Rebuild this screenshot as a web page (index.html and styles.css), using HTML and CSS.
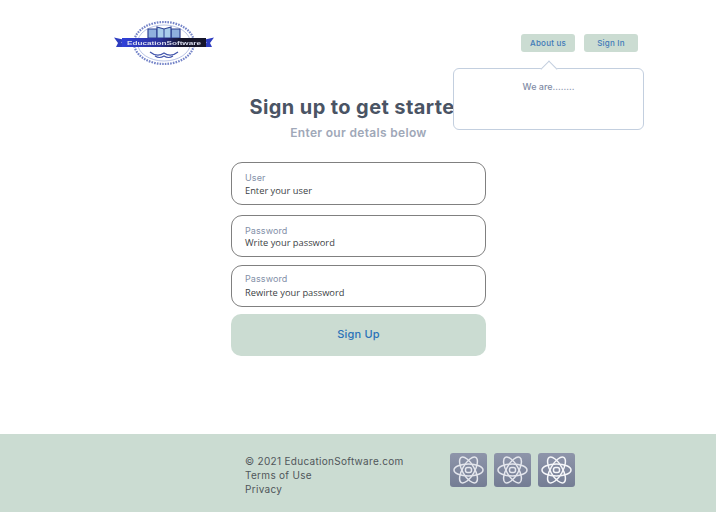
FILE: index.html
```html
<!DOCTYPE html>
<html lang="en">
<head>
<meta charset="utf-8">
<title>Sign up</title>
<link rel="stylesheet" href="styles.css">
</head>
<body>
<div class="page">
  <header class="header">
    <svg class="logo" width="100" height="46" viewBox="0 0 100 46" aria-label="EducationSoftware logo">
      <defs>
        <filter id="soft"><feGaussianBlur stdDeviation="0.55"/></filter>
        <linearGradient id="band" x1="0" x2="1" y1="0" y2="0"><stop offset="0" stop-color="#3040d8"/><stop offset="0.45" stop-color="#2b3098"/><stop offset="0.7" stop-color="#16162c"/><stop offset="1" stop-color="#15152a"/></linearGradient>
      </defs>
      <g filter="url(#soft)">
        <ellipse cx="50" cy="23" rx="30" ry="21" fill="#fff" stroke="#7484c8" stroke-width="2.2" stroke-dasharray="1.6 1.1"/>
        <ellipse cx="50" cy="23" rx="26.5" ry="18" fill="none" stroke="#aab6e0" stroke-width="0.8"/>
        <path d="M34 18V9h9v9zM57 18V9h9v9z" fill="#8fb0de" stroke="#2f4292" stroke-width="1.2"/>
        <path d="M43 18V7l7 2 7-2v11z" fill="#a9cdea" stroke="#2f4292" stroke-width="1.2"/>
        <path d="M50 9v9" stroke="#2f4292" stroke-width="1"/>
        <path d="M0 17.500l9 2-1.500 3 2.500 4.500H2l2-4z" fill="#2d3cc0"/>
        <path d="M100 17.500l-9 2 1.500 3-2.500 4.500h8l-2-4z" fill="#2d3cc0"/>
        <rect x="8" y="18" width="84" height="9" fill="url(#band)"/>
        <text x="50" y="24.800" class="logo-text" text-anchor="middle" textLength="74" lengthAdjust="spacingAndGlyphs">EducationSoftware</text>
        <path d="M36 32c5 4 10 4 14 1 4 3 9 3 14-1M41 36c3 2 6 2 9 0 3 2 6 2 9 0" fill="none" stroke="#4356ac" stroke-width="1.2"/>
      </g>
    </svg>
    <nav class="nav">
      <a class="nav-btn">About us</a>
      <a class="nav-btn">Sign In</a>
      <div class="popover"><span class="popover-text">We are........</span></div>
    </nav>
  </header>

  <main class="main">
    <h1 class="title">Sign up to get started</h1>
    <p class="subtitle">Enter our detals below</p>
    <form class="form">
      <div class="field field-user"><span class="label">User</span><span class="value">Enter your user</span></div>
      <div class="field field-pass"><span class="label">Password</span><span class="value">Write your password</span></div>
      <div class="field field-repeat"><span class="label">Password</span><span class="value">Rewirte your password</span></div>
      <button class="submit" type="button">Sign Up</button>
    </form>
  </main>

  <footer class="footer">
    <div class="footer-links">
      <span>© 2021 EducationSoftware.com</span>
      <span>Terms of Use</span>
      <span>Privacy</span>
    </div>
    <div class="socials">
      <svg class="social" width="37" height="34" viewBox="0 0 37 34"><g class="atom"><ellipse cx="18.500" cy="17" rx="14.500" ry="6"/><ellipse cx="18.500" cy="17" rx="14.500" ry="6" transform="rotate(60 18.500 17)"/><ellipse cx="18.500" cy="17" rx="14.500" ry="6" transform="rotate(-60 18.500 17)"/><rect x="15.500" y="14.500" width="6" height="5" rx="2"/></g></svg>
      <svg class="social" width="37" height="34" viewBox="0 0 37 34"><g class="atom"><ellipse cx="18.500" cy="17" rx="14.500" ry="6"/><ellipse cx="18.500" cy="17" rx="14.500" ry="6" transform="rotate(60 18.500 17)"/><ellipse cx="18.500" cy="17" rx="14.500" ry="6" transform="rotate(-60 18.500 17)"/><rect x="15.500" y="14.500" width="6" height="5" rx="2"/></g></svg>
      <svg class="social" width="37" height="34" viewBox="0 0 37 34"><g class="atom atom-bright"><ellipse cx="18.500" cy="17" rx="14.500" ry="6"/><ellipse cx="18.500" cy="17" rx="14.500" ry="6" transform="rotate(60 18.500 17)"/><ellipse cx="18.500" cy="17" rx="14.500" ry="6" transform="rotate(-60 18.500 17)"/><rect x="15.500" y="14.500" width="6" height="5" rx="2"/></g></svg>
    </div>
  </footer>
</div>
</body>
</html>
```
FILE: styles.css
```css
* { box-sizing: border-box; }
html, body { margin: 0; padding: 0; background: #fff; }
body { font-family: Inter, "Liberation Sans", sans-serif; }
.page { width: 716px; height: 512px; display: flex; flex-direction: column; overflow: hidden; }

.header { display: flex; justify-content: space-between; align-items: flex-start; padding: 20px 78px 0 114px; height: 91px; flex: none; }
.logo { display: block; }
.logo-text { font: 700 6px "Liberation Sans", sans-serif; fill: #dcdff0; }
.nav { position: relative; display: flex; gap: 9px; margin-top: 14px; }
.nav-btn { width: 54px; height: 18px; padding-bottom: 1px; display: flex; align-items: center; justify-content: center; background: #cbdcd2; border-radius: 3px; font-size: 8px; font-weight: 500; letter-spacing: 0.2px; color: #3f7ab8; }

.popover { position: absolute; top: 34px; left: -68px; width: 191px; height: 62px; background: #fff; border: 1px solid #c3cfdf; border-radius: 6px; display: flex; justify-content: center; padding-top: 12px; z-index: 2; }
.popover::before { content: ""; position: absolute; top: -6px; left: 89px; width: 11px; height: 11px; background: #fff; border-top: 1px solid #c3cfdf; border-left: 1px solid #c3cfdf; transform: rotate(45deg); }
.popover-text { font-size: 9px; font-weight: 500; color: #828ca6; }

.main { display: flex; flex-direction: column; align-items: center; flex: none; padding-left: 1px; }
.title { margin: 0; font-size: 20px; line-height: 32px; font-weight: 700; letter-spacing: 0.4px; color: #4a5464; white-space: nowrap; }
.subtitle { margin: 2px 0 0; font-size: 12px; line-height: 16px; font-weight: 600; letter-spacing: 0.32px; color: #a0a8b8; }

.form { width: 255px; margin-top: 21px; display: flex; flex-direction: column; }
.field { height: 43px; border: 1px solid #808080; border-radius: 11px; padding: 9px 13px 0; display: flex; flex-direction: column; }
.field-pass { height: 42px; margin-top: 10px; }
.field-repeat { height: 42px; margin-top: 8px; padding-top: 7px; }
.label { font-size: 9px; line-height: 12px; letter-spacing: 0.1px; color: #8390a8; }
.value { font: 9.300px/13px "Open Sans", sans-serif; color: #3c3f45; }
.field-pass .value { margin-top: -1px; }
.field-repeat .value { margin-top: 1px; }
.submit { height: 42px; margin-top: 7px; padding: 0 0 2px; border: 0; border-radius: 10px; background: #cbdcd2; font: 500 11px Inter, sans-serif; letter-spacing: 0.2px; color: #2a72b8; }

.footer { margin-top: auto; height: 78px; background: #cbdcd2; display: flex; padding: 20px 0 0 245px; gap: 47px; flex: none; }
.footer-links { display: flex; flex-direction: column; font-size: 10px; line-height: 14px; letter-spacing: 0.3px; color: #50565a; width: 158px; white-space: nowrap; }
.socials { display: flex; gap: 7px; margin-top: -1px; }
.social { display: block; border-radius: 3px; background: linear-gradient(#8e95aa, #747d94); }
.atom { filter: blur(0.3px); }
.atom ellipse, .atom rect { fill: none; stroke: #e4e6ed; stroke-width: 1.5; }
.atom-bright ellipse, .atom-bright rect { stroke: #f6f7fa; }
```
